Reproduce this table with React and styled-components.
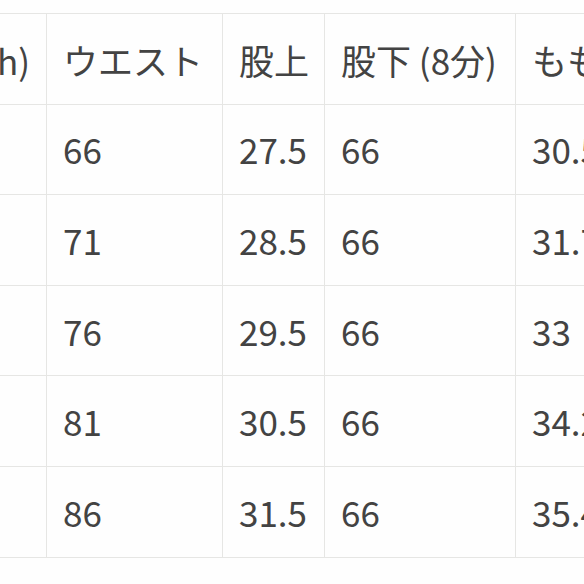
import React from "react";
import styled, { createGlobalStyle } from "styled-components";

const Global = createGlobalStyle`
  html, body { margin: 0; padding: 0; background: #ffffff; }
  body { font-family: "Noto Sans CJK JP", "Noto Sans", sans-serif; }
`;

const Viewport = styled.div`
  width: 584px;
  height: 584px;
  overflow: hidden;
  padding-top: 13px;
  box-sizing: border-box;
  background: #fefefe;
`;

const widths = [300, 176, 102, 191, 200];
const total = widths.reduce((a, b) => a + b, 0);

const Table = styled.table`
  border-collapse: collapse;
  table-layout: fixed;
  width: ${total}px;
  margin-left: -254px;
  font-family: "Noto Sans CJK JP", "Noto Sans", sans-serif;
  font-size: 35px;
  color: #434343;
`;

const Row = styled.tr`
  height: 90.6px;
`;

const Cell = styled.td`
  border: 1px solid #e6e6e4;
  padding: 0 16px;
  white-space: nowrap;
  overflow: hidden;
  vertical-align: middle;
  text-align: ${(p) => (p.$lead ? "right" : "left")};
  font-weight: 400;
  line-height: 1.2;
`;

const HeadCell = styled(Cell).attrs({ as: "th" })`
  padding-top: 2px;
`;

const headers = ["着丈 (Length)", "ウエスト", "股上", "股下 (8分)", "もも周り"];
const rows = [
  ["S", "66", "27.5", "66", "30.5"],
  ["M", "71", "28.5", "66", "31.7"],
  ["L", "76", "29.5", "66", "33"],
  ["XL", "81", "30.5", "66", "34.2"],
  ["XXL", "86", "31.5", "66", "35.4"],
];

export default function App() {
  return (
    <>
      <Global />
      <Viewport>
        <Table>
          <colgroup>
            {widths.map((w, i) => (
              <col key={i} style={{ width: w }} />
            ))}
          </colgroup>
          <thead>
            <Row>
              {headers.map((h, i) => (
                <HeadCell key={i} $lead={i === 0}>
                  {h}
                </HeadCell>
              ))}
            </Row>
          </thead>
          <tbody>
            {rows.map((r, ri) => (
              <Row key={ri}>
                {r.map((c, ci) => (
                  <Cell key={ci}>{c}</Cell>
                ))}
              </Row>
            ))}
          </tbody>
        </Table>
      </Viewport>
    </>
  );
}
